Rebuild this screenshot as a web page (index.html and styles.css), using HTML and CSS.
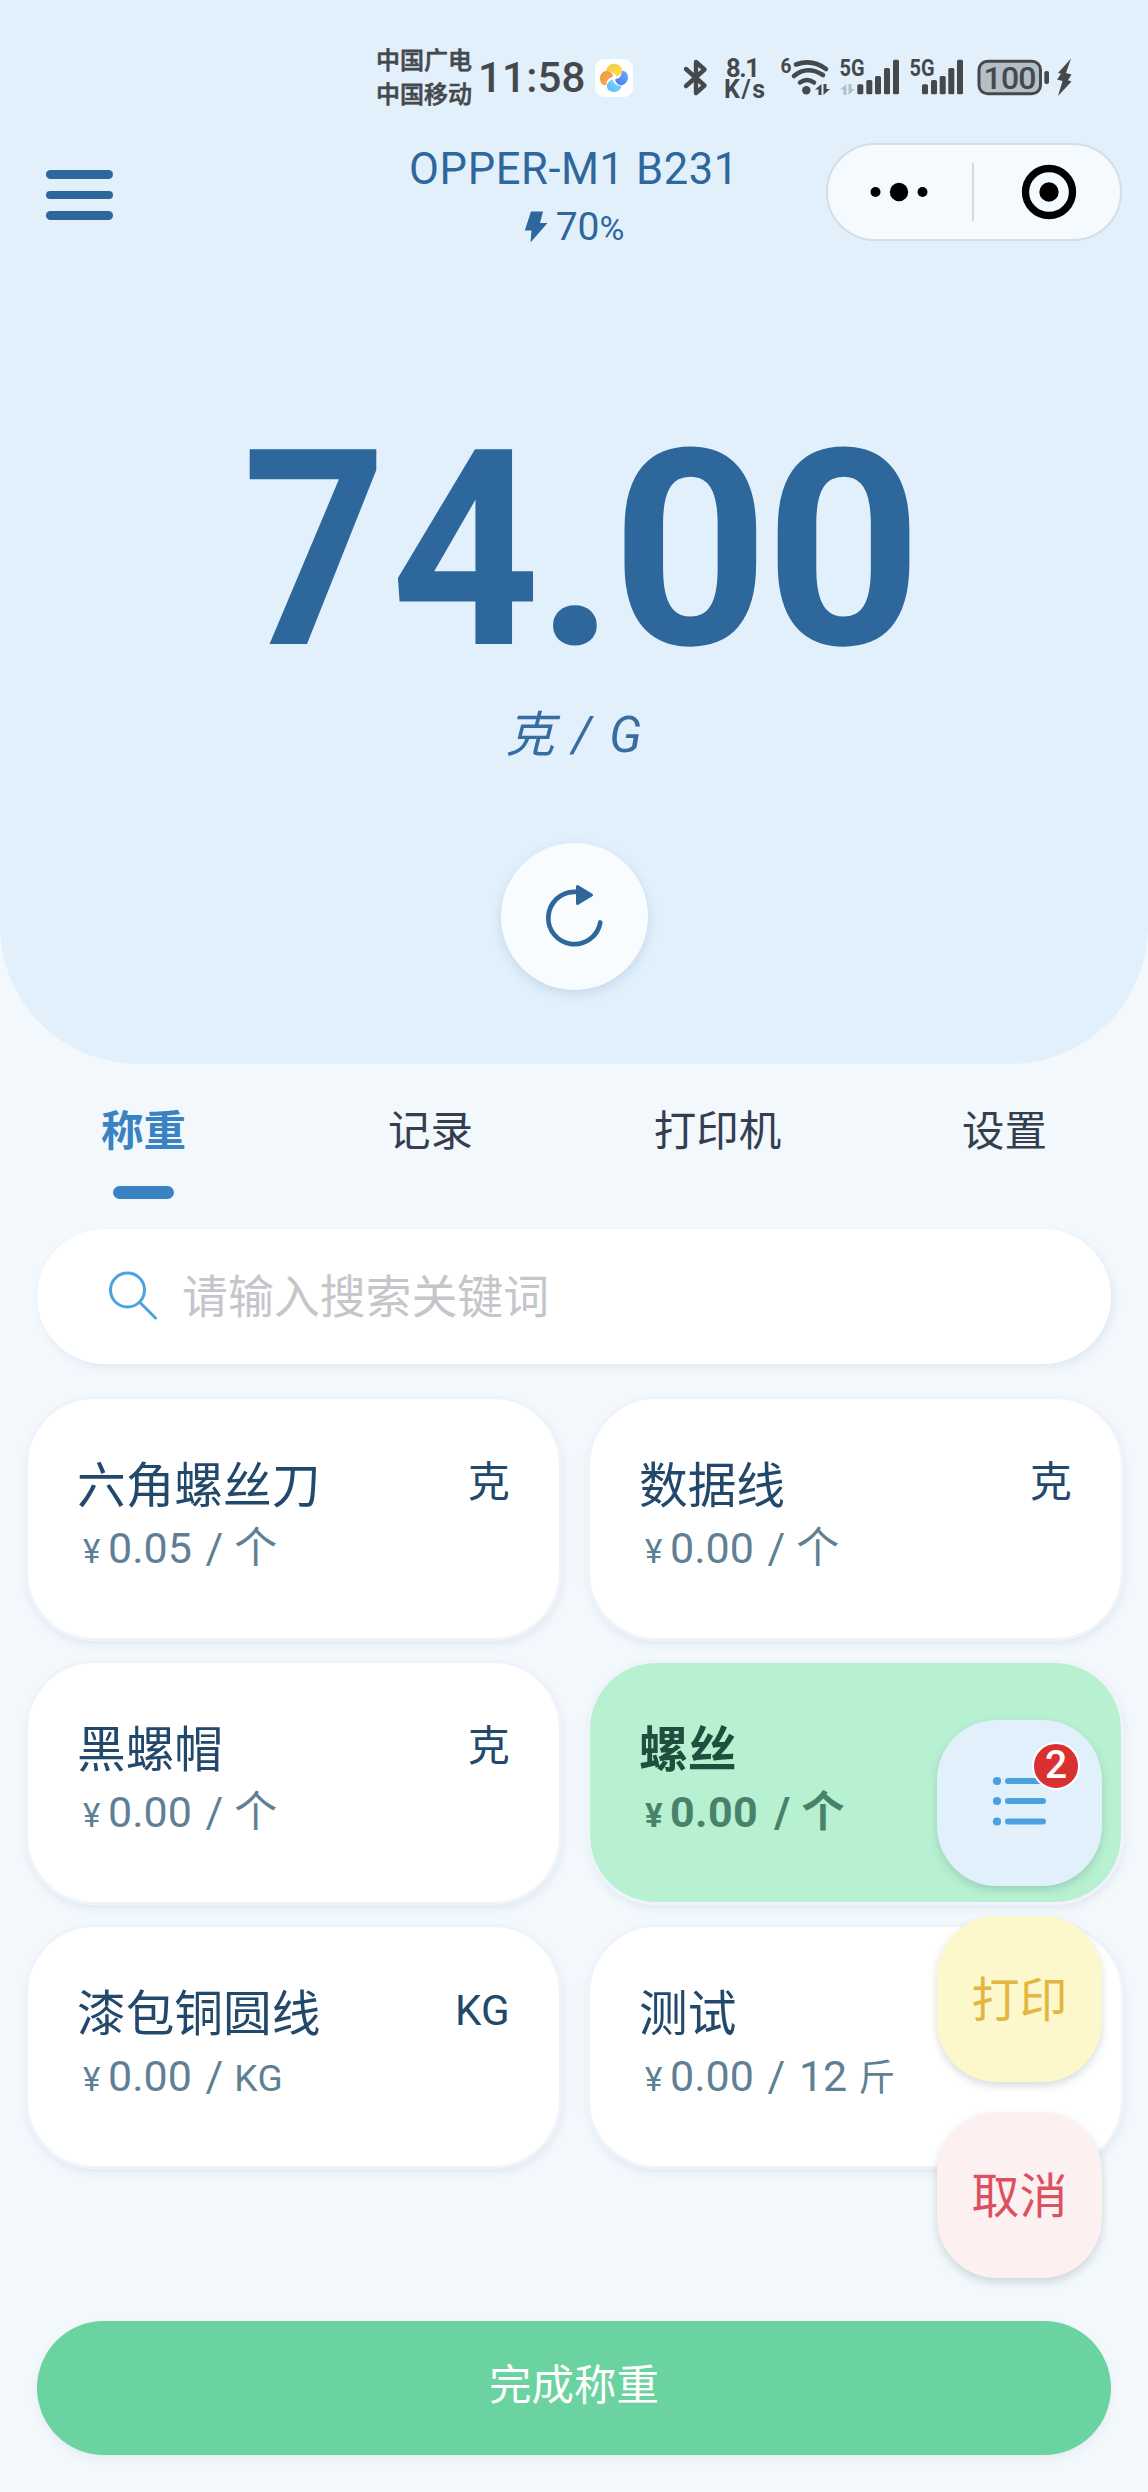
FILE: index.html
```html
<!DOCTYPE html>
<html lang="zh-CN">
<head>
<meta charset="utf-8">
<title>OPPER-M1 B231</title>
<link rel="stylesheet" href="styles.css">
</head>
<body>
<div class="page">
  <header class="hero">
    <div class="status">
      <div class="carriers"><span>中国广电</span><span>中国移动</span></div>
      <span class="clock">11:58</span>
      <svg class="app-icon" width="38" height="38" viewBox="0 0 38 38">
        <defs>
          <linearGradient id="gy" x1="0" y1="0" x2="1" y2="1"><stop offset="0" stop-color="#f5c73a"/><stop offset="1" stop-color="#fde25a"/></linearGradient>
          <linearGradient id="gb" x1="0" y1="1" x2="1" y2="0"><stop offset="0" stop-color="#3f7bf2"/><stop offset="1" stop-color="#6fa8fb"/></linearGradient>
          <linearGradient id="gc" x1="0" y1="1" x2="1" y2="0"><stop offset="0" stop-color="#56b6f8"/><stop offset="1" stop-color="#8adcfb"/></linearGradient>
          <linearGradient id="go" x1="0" y1="0" x2="1" y2="1"><stop offset="0" stop-color="#f0923a"/><stop offset="1" stop-color="#f7b45f"/></linearGradient>
        </defs>
        <rect width="38" height="38" rx="9" fill="#fff"/>
        <path d="M11 12C12 6 17 4 21 5c4 1 7 4 6.500 7.500-.5 2.500-3 4.500-6 5.500-1-3-4-5.500-10.500-6z" fill="url(#gy)"/>
        <path d="M27 12c4-.5 6 3 6 6.500 0 4-3.500 8-7 7.700-3-.2-5.500-2.700-6-6.200 4 0 7-3 7-8z" fill="url(#gb)"/>
        <path d="M26.500 26.500C26 31 22 33.500 18.500 33 14.500 32.500 11.500 30 12 26.500c.5-3.500 3.500-5.500 6-6 .5 4 4 6.500 8.500 6z" fill="url(#gc)"/>
        <path d="M11.500 26C7.500 27 5 23.500 5 19.500 5 15 8.500 11.500 12.500 12c3.500.4 5.500 3 6 6-4.500.5-7 3.500-7 8z" fill="url(#go)"/>
        <circle cx="19" cy="19" r="2" fill="#fff"/>
      </svg>
      <svg class="signals" width="394" height="44" viewBox="682 55 394 44">
        <path d="M686 69l18.500 16.500-8.500 7.500V62l8.500 7.500L686 86" fill="none" stroke="#45494c" stroke-width="4.400" stroke-linejoin="round" stroke-linecap="round"/>
        <g class="signal-text" fill="#45494c">
          <text x="726" y="76.500" font-size="25.500" textLength="34">8.1</text>
          <text x="724" y="97.500" font-size="25" textLength="41">K/s</text>
          <text x="780.500" y="73" font-size="21" textLength="11" lengthAdjust="spacingAndGlyphs">6</text>
          <text x="839.500" y="76" font-size="23" textLength="25" lengthAdjust="spacingAndGlyphs">5G</text>
          <text x="909.500" y="76" font-size="23" textLength="25" lengthAdjust="spacingAndGlyphs">5G</text>
        </g>
        <g fill="none" stroke="#45494c" stroke-width="4.600" stroke-linecap="round">
          <path d="M796 64.500q16-6 30 4.500M794 76q13-11 29-1M800 82.500q7-5 14 0"/>
        </g>
        <circle cx="806.300" cy="90.300" r="4.200" fill="#45494c"/>
        <path d="M821.500 84v11h-3v-5.500H815zM823.500 84v11l6.500-6h-3.500V84z" fill="#45494c"/>
        <path d="M846.500 84v11h-3v-5.500H840zM848.500 84v11l6.500-6h-3.500V84z" fill="#b3bfc8"/>
        <g fill="#45494c">
          <rect x="857.300" y="84.300" width="6" height="10" rx="1.500"/><rect x="866.300" y="80" width="6" height="14.300" rx="1.500"/><rect x="875" y="76" width="6" height="18.300" rx="1.500"/><rect x="884" y="68" width="6" height="26.300" rx="1.500"/><rect x="893" y="59.700" width="6" height="34.600" rx="1.500"/>
          <rect x="922" y="84.300" width="6" height="10" rx="1.500"/><rect x="931" y="80" width="6" height="14.300" rx="1.500"/><rect x="939.700" y="76" width="6" height="18.300" rx="1.500"/><rect x="948.300" y="68" width="6" height="26.300" rx="1.500"/><rect x="957" y="59.700" width="6" height="34.600" rx="1.500"/>
        </g>
        <rect x="979" y="61.300" width="61.500" height="32.500" rx="8.500" fill="#b4bfc8" stroke="#45494c" stroke-width="3"/>
        <rect x="1044.300" y="71" width="4.700" height="13" rx="2" fill="#45494c"/>
        <text class="battery-text" x="983.500" y="89" font-size="32" textLength="53">100</text>
        <path d="M1071 58.500L1058 73l3 .8-4 5.700 5.500 1.500-4.500 15 13.500-14.500-3.500-1.200 3.500-5.800-5.500-1.500z" fill="#45494c"/>
      </svg>
    </div>

    <nav class="titlebar">
      <div class="menu"><i></i><i></i><i></i></div>
      <div class="device">
        <div class="device-name">OPPER-M1 B231</div>
        <div class="device-power">
          <svg width="24" height="32" viewBox="0 0 24 32"><path d="M7 .5h12L16 12h7.500L6.500 31.500 7.500 19.500H.8z" fill="#2e679c"/></svg>
          <span>70<small>%</small></span>
        </div>
      </div>
      <div class="capsule">
        <svg width="60" height="20" viewBox="0 0 60 20"><circle cx="6.500" cy="10" r="5"/><circle cx="30" cy="10" r="9.200"/><circle cx="53.500" cy="10" r="5"/></svg>
        <b></b>
        <svg width="56" height="56" viewBox="0 0 56 56"><circle cx="28" cy="28" r="23.500" fill="none" stroke="#000" stroke-width="7.300"/><circle cx="28" cy="28" r="9.700"/></svg>
      </div>
    </nav>

    <div class="reading"><span class="seven">7</span><span class="four">4</span>.00</div>
    <div class="unit">克 / G</div>
    <div class="refresh">
      <svg width="64" height="70" viewBox="0 0 64 70">
        <path d="M58.300 40.500A26.200 26.200 0 1 1 32 9.800h3" fill="none" stroke="#2e679c" stroke-width="4.700" stroke-linecap="round"/>
        <path d="M35.500 4.500v17l14-8.500z" fill="#2e679c" stroke="#2e679c" stroke-width="3" stroke-linejoin="round"/>
      </svg>
    </div>
  </header>

  <div class="tabs">
    <div class="tab active">称重</div><div class="tab">记录</div><div class="tab">打印机</div><div class="tab">设置</div>
  </div>

  <div class="search">
    <svg width="50" height="50" viewBox="0 0 50 50"><g fill="none" stroke="#4ba3dd" stroke-width="3" stroke-linecap="round"><circle cx="19.500" cy="20" r="17"/><path d="M32 32.500l15.500 15.500"/></g></svg>
    <span>请输入搜索关键词</span>
  </div>

  <main class="grid">
    <div class="card"><div class="row"><span class="name">六角螺丝刀</span><span class="mass">克</span></div><div class="price"><i>¥</i><span class="amount">0.05 /</span><span>个</span></div></div>
    <div class="card"><div class="row"><span class="name">数据线</span><span class="mass">克</span></div><div class="price"><i>¥</i><span class="amount">0.00 /</span><span>个</span></div></div>
    <div class="card"><div class="row"><span class="name">黑螺帽</span><span class="mass">克</span></div><div class="price"><i>¥</i><span class="amount">0.00 /</span><span>个</span></div></div>
    <div class="card selected"><div class="row"><span class="name">螺丝</span></div><div class="price"><i>¥</i><span class="amount">0.00 /</span><span>个</span></div></div>
    <div class="card"><div class="row"><span class="name">漆包铜圆线</span><span class="mass">KG</span></div><div class="price"><i>¥</i><span class="amount">0.00 /</span><span class="small">KG</span></div></div>
    <div class="card"><div class="row"><span class="name">测试</span></div><div class="price"><i>¥</i><span class="amount">0.00 / 12</span><span class="small">斤</span></div></div>
  </main>

  <div class="finish">完成称重</div>

  <aside class="floating">
    <div class="fab list">
      <svg width="58" height="50" viewBox="0 0 58 50"><g fill="#4ba0e0"><circle cx="5" cy="5" r="4.100"/><circle cx="5" cy="25" r="4.100"/><circle cx="5" cy="45.500" r="4.100"/><rect x="13" y="2" width="41" height="6" rx="3"/><rect x="13" y="22" width="41" height="6" rx="3"/><rect x="13" y="42.500" width="41" height="6" rx="3"/></g></svg>
      <span class="badge">2</span>
    </div>
    <div class="fab print">打印</div>
    <div class="fab cancel">取消</div>
  </aside>
</div>
</body>
</html>
```
FILE: styles.css
```css
* { box-sizing: border-box; }
body {
  margin: 0;
  background: #f2f8fc;
  font-family: Roboto, "Noto Sans CJK SC", sans-serif;
}
.page { position: relative; width: 1148px; height: 2492px; overflow: hidden; }

.hero {
  height: 1064px;
  background: #e2f0fc;
  border-radius: 0 0 138px 138px;
  color: #2e679c;
  display: flex;
  flex-direction: column;
  align-items: center;
}

/* status bar */
.status {
  width: 100%;
  height: 143px;
  padding: 43px 72px 0 376px;
  display: flex;
  align-items: flex-start;
  color: #45494c;
}
.carriers { display: flex; flex-direction: column; width: 102px; padding-top: 2px; font-size: 24px; font-weight: 500; line-height: 33.500px; -webkit-text-stroke: .6px #45494c; }
.clock { width: 117px; font-size: 42px; font-weight: 500; line-height: 70px; letter-spacing: .2px; }
.app-icon { margin-top: 16px; flex: none; }
.signals { margin: 12px 0 0 49px; flex: none; overflow: visible; }
.signal-text { font-weight: 700; }
.battery-text { font-weight: 500; fill: #45494c; }

/* title bar */
.titlebar {
  width: 100%;
  height: 98px;
  padding: 0 26px 0 46px;
  display: grid;
  grid-template-columns: 296px 1fr 296px;
  align-items: start;
}
.menu { display: flex; flex-direction: column; gap: 12px; padding-top: 27px; }
.menu i { width: 67px; height: 8.700px; border-radius: 5px; background: #2e679c; }
.device { display: flex; flex-direction: column; align-items: center; padding-right: 36px; margin-left: 16px; }
.device-name { font-size: 43.500px; line-height: 56px; white-space: nowrap; margin-top: -1px; letter-spacing: .6px; }
.device-power { display: flex; align-items: center; gap: 8px; font-size: 39px; line-height: 50px; margin-top: 2px; }
.device-power span { display: block; padding-top: 2px; }
.device-power small { font-size: 34px; }
.capsule {
  height: 98px;
  border: 2px solid #d6dee5;
  border-radius: 49px;
  background: #f5faff;
  display: flex;
  align-items: center;
  padding: 0 42px 0 41px;
}
.capsule svg { flex: none; }
.capsule b { flex: none; width: 2px; height: 58px; background: #d3dadf; margin: 0 47px 0 43px; }

/* scale reading */
.reading { font-size: 274px; font-weight: 700; line-height: 300px; margin-top: 160px; letter-spacing: -4px; white-space: nowrap; }
.seven, .four { display: inline-block; transform-origin: 100% 50%; }
.seven { transform: scaleX(.92); }
.four { transform: scaleX(.95); }
.unit { font-size: 49px; font-style: italic; line-height: 60px; margin-top: 5px; opacity: .95; word-spacing: 4px; letter-spacing: .8px; }
.refresh {
  width: 147px;
  height: 147px;
  margin-top: 77px;
  border-radius: 50%;
  background: #f8fcff;
  box-shadow: 0 4px 12px rgba(40, 80, 120, .15);
  display: flex;
  align-items: center;
  justify-content: center;
}

/* tabs */
.tabs { display: grid; grid-template-columns: repeat(4, 1fr); height: 165px; padding-top: 37px; }
.tab { font-size: 42.500px; line-height: 62px; text-align: center; color: #343e50; }
.tab.active { color: #3a83c3; font-weight: 700; }
.tab.active::after { content: ""; display: block; width: 61px; height: 13px; margin: 23px auto 0; border-radius: 7px; background: #3a83c3; }

.search {
  height: 135px;
  margin: 0 37px;
  padding: 0 0 4px 71px;
  border-radius: 68px;
  background: #fff;
  box-shadow: 3px 4px 8px rgba(50, 70, 110, .08);
  display: flex;
  align-items: center;
  gap: 24px;
  font-size: 45.900px;
  color: #c4c6ca;
}
.search span { margin-top: -4px; }

/* products */
.grid { display: grid; grid-template-columns: 537px 537px; gap: 19px 25px; margin: 32px 0 0 25px; grid-auto-rows: 245px; }
.card {
  border: 3px solid #f0f4fa;
  border-radius: 69px;
  background: #fff;
  background-clip: padding-box;
  box-shadow: 1px 4px 7px rgba(50, 70, 110, .08);
  padding: 51px 49px 0 49px;
  color: #22496b;
}
.row { display: flex; justify-content: space-between; height: 71px; }
.name { font-size: 48.700px; line-height: 73px; }
.mass { font-size: 42px; line-height: 67px; margin-top: -1px; letter-spacing: .3px; }
.price { display: flex; align-items: baseline; color: #5f7f95; font-size: 43px; line-height: 54px; word-spacing: 3px; }
.price i { width: 31px; padding-left: 6px; font-size: 33px; font-style: normal; }
.price .amount { margin-right: 11px; }
.price .small { font-size: 37px; letter-spacing: .5px; }
.selected { background-color: #b7f1d2; color: #1f4f3d; font-weight: 700; }
.selected .price { color: #47826a; word-spacing: 5px; }
.selected .amount { letter-spacing: .4px; }

.finish {
  height: 134px;
  margin: 152px 37px 0;
  border-radius: 67px;
  background: #6bd3a0;
  box-shadow: 0 4px 10px rgba(50, 70, 110, .06);
  color: #fff;
  font-size: 42.500px;
  line-height: 130px;
  text-align: center;
}

/* floating actions over the list */
.floating { position: absolute; left: 937px; top: 1720px; display: flex; flex-direction: column; gap: 30px; }
.fab {
  position: relative;
  width: 165px;
  height: 166px;
  border-radius: 60px;
  box-shadow: 0 4px 9px rgba(40, 60, 80, .18);
  display: flex;
  align-items: center;
  justify-content: center;
  font-size: 48px;
  padding-bottom: 7px;
}
.list { background: #e2f0fc; padding: 0 0 4px 2px; }
.print { background: #fdf8cb; color: #e2b640; }
.cancel { background: #fdf0f1; color: #dc5162; }
.badge {
  position: absolute;
  left: 95px;
  top: 22px;
  width: 48px;
  height: 48px;
  border: 2.500px solid #fff;
  border-radius: 50%;
  background: #d93131;
  color: #fff;
  font-size: 39px;
  font-weight: 500;
  line-height: 42px;
  text-align: center;
}
```
